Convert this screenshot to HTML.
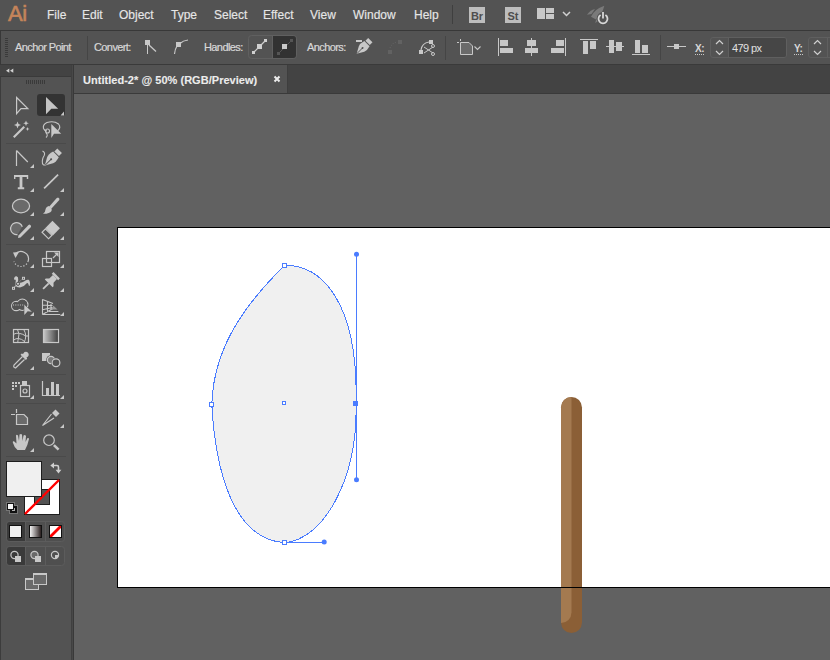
<!DOCTYPE html>
<html><head><meta charset="utf-8">
<style>
*{margin:0;padding:0;box-sizing:border-box}
html,body{width:830px;height:660px;overflow:hidden;background:#535353;font-family:"Liberation Sans",sans-serif}
.a{position:absolute}
.t{position:absolute;white-space:pre;color:#dcdcdc;line-height:1}
.m{font-size:12px;top:9px;color:#e6e6e6;-webkit-text-stroke:0.15px #e6e6e6}
.c{font-size:11px;top:42px;letter-spacing:-0.6px;color:#d8d8d8;-webkit-text-stroke:0.2px #d8d8d8}
svg{position:absolute;overflow:visible}
</style></head><body>
<!-- menu bar -->
<div class="a" style="left:0;top:0;width:830px;height:30px;background:#535353"></div>
<div class="t" style="left:8px;top:3px;font-size:22px;color:#c5845a;letter-spacing:-0.5px;-webkit-text-stroke:0.6px #c5845a">Ai</div>
<div class="t m" style="left:47px">File</div>
<div class="t m" style="left:82px">Edit</div>
<div class="t m" style="left:119px">Object</div>
<div class="t m" style="left:171px">Type</div>
<div class="t m" style="left:214px">Select</div>
<div class="t m" style="left:263px">Effect</div>
<div class="t m" style="left:310px">View</div>
<div class="t m" style="left:353px">Window</div>
<div class="t m" style="left:414px">Help</div>

<!-- control bar -->
<div class="a" style="left:0;top:30px;width:830px;height:35px;background:#535353;border-top:1px solid #383838;border-left:1px solid #383838;border-bottom:1px solid #3a3a3a"></div>
<div class="t c" style="left:15px">Anchor Point</div>
<div class="t c" style="left:94px">Convert:</div>
<div class="t c" style="left:204px">Handles:</div>
<div class="t c" style="left:307px">Anchors:</div>


<!-- top icons -->
<svg class="a" style="left:0;top:0" width="830" height="660" viewBox="0 0 830 660">
 <g shape-rendering="crispEdges">
  <rect x="452" y="5" width="1" height="19" fill="#3f3f3f"/>
  <rect x="469" y="7" width="16" height="16" fill="#bdbdbd"/>
  <rect x="505" y="7" width="16" height="16" fill="#bdbdbd"/>
  <rect x="537" y="8" width="8" height="11" fill="#c8c8c8"/>
  <rect x="546" y="8" width="8" height="5" fill="#c8c8c8"/>
  <rect x="546" y="14" width="8" height="5" fill="#c8c8c8"/>
 </g>
 <text x="477" y="20" font-size="11" font-weight="bold" fill="#4e4e4e" text-anchor="middle" font-family="Liberation Sans">Br</text>
 <text x="513" y="20" font-size="11" font-weight="bold" fill="#4e4e4e" text-anchor="middle" font-family="Liberation Sans">St</text>
 <path d="M563 12 L566.5 15.5 L570 12" fill="none" stroke="#d0d0d0" stroke-width="1.5"/>
 <!-- rocket -->
 <g fill="#7a7a7a">
  <path d="M591 16.8 Q594 9.5 604.3 5.8 Q602.5 14 596 19.5 Z"/>
  <path d="M587 14.8 Q590 10.2 595 9 L591.5 14 Z"/>
  <path d="M595.3 23 Q595.3 19.5 598 18 L597.5 21.5 Z"/>
 </g>
 <circle cx="603" cy="18.4" r="6.3" fill="#535353"/>
 <path d="M600.6 15 A4.5 4.5 0 1 0 605.4 15" fill="none" stroke="#d8d8d8" stroke-width="1.8"/>
 <rect x="602.1" y="12" width="1.8" height="6.5" fill="#d8d8d8"/>
 <!-- control bar grip -->
 <g shape-rendering="crispEdges" fill="#3a3a3a">
  <rect x="5" y="38" width="3" height="1"/><rect x="5" y="40" width="3" height="1"/><rect x="5" y="42" width="3" height="1"/>
  <rect x="5" y="44" width="3" height="1"/><rect x="5" y="46" width="3" height="1"/><rect x="5" y="48" width="3" height="1"/>
  <rect x="5" y="50" width="3" height="1"/><rect x="5" y="52" width="3" height="1"/><rect x="5" y="54" width="3" height="1"/>
  <rect x="5" y="56" width="3" height="1"/>
 </g>
 <g shape-rendering="crispEdges">
  <rect x="87" y="36" width="1" height="24" fill="#454545"/>
  <rect x="445" y="36" width="1" height="24" fill="#454545"/>
  <rect x="660" y="35" width="1" height="25" fill="#454545"/>
 </g>
 <!-- convert icons -->
 <g fill="#c8c8c8" stroke="#c8c8c8">
  <rect x="145" y="40" width="5" height="5" stroke="none"/>
  <rect x="147" y="45" width="1" height="9" stroke="none"/>
  <path d="M149 45 L156 51.5" stroke-width="1.3" fill="none"/>
  <rect x="176" y="42" width="5" height="5" stroke="none"/>
  <path d="M174.5 54 Q175 49 177 46" stroke-width="1.2" fill="none"/>
  <path d="M180 43.5 Q183 40.5 188 40" stroke-width="1.2" fill="none"/>
 </g>
 <!-- handles group -->
 <rect x="248.5" y="35.5" width="48" height="23" rx="3" fill="none" stroke="#606060"/>
 <path d="M273 36 H293 A3 3 0 0 1 296 39 V55 A3 3 0 0 1 293 58 H273 Z" fill="#323232"/>
 <rect x="272" y="36" width="1" height="22" fill="#606060" shape-rendering="crispEdges"/>
 <path d="M254 52 L265 41" stroke="#d0d0d0" stroke-width="1.2"/>
 <path d="M279 53 L291 41" stroke="#555" stroke-width="1"/>
 <g shape-rendering="crispEdges">
  <rect x="257" y="44" width="5" height="5" fill="#d0d0d0"/>
  <rect x="252" y="51" width="3" height="3" fill="#d0d0d0"/>
  <rect x="264" y="39" width="3" height="3" fill="#d0d0d0"/>
  <rect x="282" y="44" width="5" height="5" fill="#c8c8c8"/>
  <rect x="277" y="52" width="3" height="3" fill="#555"/>
  <rect x="290" y="39" width="3" height="3" fill="#555"/>
 </g>
 <!-- pen minus -->
 <rect x="356" y="40" width="6" height="2" fill="#c8c8c8"/>
 <g transform="translate(363.5,47) rotate(45) scale(0.92)" fill="#c8c8c8">
   <rect x="-3.3" y="-10.5" width="6.6" height="4.2"/>
   <path d="M-4 -5.3 H4 Q5.6 0 4.2 3 L0 10.5 L-4.2 3 Q-5.6 0 -4 -5.3 Z"/>
   <path d="M0 1 V10" stroke="#535353" stroke-width="1" fill="none"/>
   <circle cx="0" cy="1.5" r="1" fill="#535353"/>
 </g>
 <!-- disabled -->
 <rect x="388" y="50" width="4" height="4" fill="#626262"/>
 <rect x="398" y="40" width="4" height="4" fill="#626262"/>
 <path d="M390 48 Q392 43 397 42" fill="none" stroke="#626262" stroke-width="1.2" stroke-dasharray="1 1.5"/>
 <!-- scissors -->
 <rect x="419" y="50" width="4" height="4" fill="#c8c8c8"/>
 <rect x="429" y="40" width="4" height="4" fill="#c8c8c8"/>
 <path d="M421 50 Q422 43 429 42" fill="none" stroke="#c8c8c8" stroke-width="1.2"/>
 <path d="M424 47 L433 53 M424 53 L433 47" stroke="#c8c8c8" stroke-width="1"/>
 <circle cx="433" cy="46" r="1.5" fill="none" stroke="#c8c8c8"/>
 <circle cx="433" cy="54" r="1.5" fill="none" stroke="#c8c8c8"/>
 <!-- artboard isolate -->
 <path d="M460.5 42.5 H469 L472.5 46 V54.5 H460.5 Z" fill="#6a6a6a" stroke="#c8c8c8"/>
 <path d="M457 42.5 H459 M460.5 39 V41" stroke="#c8c8c8"/>
 <path d="M474.5 46.5 L477.5 49.5 L480.5 46.5" fill="none" stroke="#c8c8c8" stroke-width="1.1"/>
 <!-- align -->
 <g fill="#c8c8c8" shape-rendering="crispEdges">
  <rect x="498" y="38" width="1" height="18"/><rect x="500" y="40" width="8" height="6"/><rect x="500" y="48" width="13" height="5"/>
  <rect x="531" y="38" width="1" height="18"/><rect x="527" y="40" width="9" height="6"/><rect x="525" y="48" width="13" height="5"/>
  <rect x="565" y="38" width="1" height="18"/><rect x="556" y="40" width="8" height="6"/><rect x="551" y="48" width="13" height="5"/>
  <rect x="580" y="39" width="18" height="1"/><rect x="583" y="41" width="5" height="13"/><rect x="590" y="41" width="6" height="8"/>
  <rect x="606" y="46" width="18" height="1"/><rect x="609" y="40" width="5" height="13"/><rect x="616" y="42" width="6" height="9"/>
  <rect x="632" y="54" width="18" height="1"/><rect x="635" y="40" width="5" height="13"/><rect x="642" y="45" width="6" height="8"/>
  <rect x="667" y="46" width="19" height="1"/><rect x="674" y="44" width="5" height="5"/>
 </g>
 <!-- X: Y: dotted underline -->
 <g fill="#c8c8c8" shape-rendering="crispEdges">
  <rect x="695" y="54" width="1" height="1"/><rect x="697" y="54" width="1" height="1"/><rect x="699" y="54" width="1" height="1"/><rect x="701" y="54" width="1" height="1"/><rect x="703" y="54" width="1" height="1"/>
  <rect x="794" y="54" width="1" height="1"/><rect x="796" y="54" width="1" height="1"/><rect x="798" y="54" width="1" height="1"/><rect x="800" y="54" width="1" height="1"/><rect x="802" y="54" width="1" height="1"/>
 </g>
 <!-- stepper boxes -->
 <rect x="710.5" y="37.5" width="76" height="20" rx="2.5" fill="#535353" stroke="#5f5f5f"/>
 <path d="M728 38 H784 A2 2 0 0 1 786 40 V55 A2 2 0 0 1 784 57 H728 Z" fill="#464646"/>
 <rect x="728" y="38" width="1" height="19" fill="#5f5f5f"/>
 <path d="M716 44 L719.5 40.5 L723 44 M716 51 L719.5 54.5 L723 51" fill="none" stroke="#d0d0d0" stroke-width="1.2"/>
 <rect x="808.5" y="37.5" width="30" height="20" rx="2.5" fill="#535353" stroke="#5f5f5f"/>
 <rect x="827" y="38" width="1" height="19" fill="#5f5f5f"/>
 <path d="M814 44 L817.5 40.5 L821 44 M814 51 L817.5 54.5 L821 51" fill="none" stroke="#d0d0d0" stroke-width="1.2"/>
 <text x="695" y="51.5" font-size="10" font-weight="bold" fill="#d8d8d8" letter-spacing="-0.5" font-family="Liberation Sans">X:</text>
 <text x="794" y="51.5" font-size="10" font-weight="bold" fill="#d8d8d8" letter-spacing="-0.5" font-family="Liberation Sans">Y:</text>
 <text x="732" y="51.5" font-size="11" fill="#e0e0e0" letter-spacing="-0.6" font-family="Liberation Sans">479 px</text>
</svg>

<!-- tab bar -->
<div class="a" style="left:74px;top:65px;width:756px;height:29px;background:#434343;border-bottom:1px solid #3a3a3a"></div>
<div class="a" style="left:74px;top:65px;width:213px;height:28px;background:#535353"></div>
<div class="t" style="left:83px;top:75px;font-size:11px;font-weight:bold;letter-spacing:0.03px;color:#ececec;-webkit-text-stroke:0.1px #ececec">Untitled-2* @ 50% (RGB/Preview)</div>

<!-- pasteboard -->
<div class="a" style="left:74px;top:94px;width:756px;height:566px;background:#616161"></div>

<!-- left tools panel -->
<div class="a" style="left:0;top:65px;width:72px;height:595px;background:#535353;border-left:1px solid #3c3c3c"></div>
<div class="a" style="left:0;top:65px;width:72px;height:12px;background:#434343;border-bottom:1px solid #3a3a3a"></div>
<div class="a" style="left:71px;top:65px;width:3px;height:595px;background:linear-gradient(to right,#404040 0,#404040 1px,#484848 1px,#484848 2px,#393939 2px)"></div>


<!-- tools -->
<svg class="a" style="left:0;top:0" width="830" height="660" viewBox="0 0 830 660">
 <path d="M9.3 68.6 L6 70.7 L9.3 72.8 Z M13.3 68.6 L10 70.7 L13.3 72.8 Z" fill="#d0d0d0"/>
 <g shape-rendering="crispEdges" fill="#3a3a3a">
  <rect x="26" y="80" width="1" height="4"/><rect x="28" y="80" width="1" height="4"/><rect x="30" y="80" width="1" height="4"/><rect x="32" y="80" width="1" height="4"/><rect x="34" y="80" width="1" height="4"/><rect x="36" y="80" width="1" height="4"/><rect x="38" y="80" width="1" height="4"/><rect x="40" y="80" width="1" height="4"/><rect x="42" y="80" width="1" height="4"/><rect x="44" y="80" width="1" height="4"/>
 </g>
 <g shape-rendering="crispEdges" fill="#4a4a4a"><rect x="6" y="143" width="60" height="1"/><rect x="6" y="244" width="60" height="1"/><rect x="6" y="321" width="60" height="1"/><rect x="6" y="374" width="60" height="1"/><rect x="6" y="403" width="60" height="1"/><rect x="6" y="456" width="60" height="1"/></g>
 <rect x="37" y="94" width="28" height="22" rx="3" fill="#333333"/>
 <g fill="#c8c8c8"><path d="M34 164 V168 H30 Z"/><path d="M34 188 V192 H30 Z"/><path d="M64 188 V192 H60 Z"/><path d="M34 212 V216 H30 Z"/><path d="M64 212 V216 H60 Z"/><path d="M34 236 V240 H30 Z"/><path d="M64 236 V240 H60 Z"/><path d="M34 264 V268 H30 Z"/><path d="M64 264 V268 H60 Z"/><path d="M34 288 V292 H30 Z"/><path d="M64 288 V292 H60 Z"/><path d="M34 312 V316 H30 Z"/><path d="M64 312 V316 H60 Z"/><path d="M34 366 V370 H30 Z"/><path d="M34 395 V399 H30 Z"/><path d="M64 395 V399 H60 Z"/><path d="M64 424 V428 H60 Z"/><path d="M34 448 V452 H30 Z"/><path d="M64 111.5 V115.5 H60.5 Z" /></g>
 <g fill="none" stroke="#c8c8c8" stroke-width="1.2" stroke-linejoin="miter">
  <!-- selection -->
  <path d="M16.6 97.5 L27.8 108.6 L21 108.6 L16.6 113.6 Z"/>
  <!-- curvature -->
  <path d="M16.5 150.5 V166 M16.5 150.5 L27.8 162"/>
  <!-- ellipse -->
  <ellipse cx="21" cy="206" rx="8.6" ry="6.8" fill="#6a6a6a"/>
  <!-- rotate -->
  <path d="M15.4 254 A7.5 7.5 0 0 1 28.2 261"/>
  <path d="M28.2 261 A7.5 7.5 0 0 1 13.9 261.5" stroke-dasharray="1.2 1.8"/>
  <!-- scale -->
  <rect x="46.5" y="251.5" width="13" height="11"/>
  <rect x="42.5" y="258.5" width="9" height="8"/>
  <path d="M53 258 L57.5 253.5"/><path d="M58.5 252.5 V257 L54 252.5 Z" fill="#c8c8c8" stroke="none"/>
  <!-- shape builder -->
  <circle cx="16.2" cy="306" r="4.6"/>
  <circle cx="22.3" cy="304.8" r="5.6"/>
  <circle cx="16.2" cy="306" r="4" fill="#535353" stroke="none"/>
  <circle cx="22.3" cy="304.8" r="5" fill="#535353" stroke="none"/>
  <path d="M13 305 H25" stroke-dasharray="1 1.3" stroke-width="1.1"/>
  <!-- perspective -->
  <path d="M42.5 299.2 V314.8 M42.5 299.5 L53 303.5 M42.5 314.5 L53 308.5 M42.5 305 L52.5 305.5 M42.5 309.8 L52.5 307.5 M47.5 301.2 V312.2 M51 302.8 V310" stroke-width="1.1"/>
  <path d="M43 314.5 H60.3 M49 311.5 H58.4" stroke-width="1.1"/>
  <path d="M53.5 305.8 L57.5 309.5 H51 Z" fill="#9a9a9a" stroke="none"/>
  <!-- mesh -->
  <rect x="13.5" y="329.5" width="15" height="13"/>
  <path d="M17.5 329.5 Q20 334 18.4 338.5 Q17.8 340.5 17.8 342.5 M23.8 329.5 Q27.5 336 24.1 342.5 M13.5 334.4 Q16 332.8 18.8 333.3 M13.5 340.1 Q16 338.3 18.4 338.5 Q22 339 24.1 341.2 M19.2 333.3 Q23 334 25.7 336 H28.5" stroke-width="1"/>
  <!-- gradient -->
  <!-- eyedropper -->
  <path d="M22.5 356.5 L14 365 Q13 367.5 15.5 368 L24.5 359.5" />
  <!-- blend -->

  <!-- symbol sprayer -->
  <rect x="20.5" y="385.5" width="9" height="11"/>
  <circle cx="25" cy="391" r="2"/>
  <!-- graph -->
  <path d="M42.5 381 V395.5 H60"/>
  


<!-- artboard -->
  <path d="M16.5 414.5 H24 L27.5 418 V424.5 H16.5 Z" fill="#6a6a6a"/>
  <path d="M16.5 409 V413 M11 414.5 H15"/>
  <!-- slice -->
  <path d="M51.5 414 L42.5 425.5 L54 418"/>
  <!-- zoom -->
  <circle cx="49" cy="440.2" r="5.3"/>
  <!-- blob brush arc -->
  <path d="M22.3 226.8 A6 6 0 1 0 17.5 234.6" fill="#6a6a6a"/>
  <!-- pen tail -->
  <path d="M46.5 164.5 Q42 166.5 42.3 161 Q42.7 157.5 44.2 155.5 Q45.5 152.5 42.5 151" stroke-width="1.1"/>
  <!-- lasso loop -->
  <path d="M57.5 131 Q61.5 127.5 58.5 124 Q54 120.5 47 122.5 Q42.5 124.5 43.5 128.5 Q44.5 131 47 131" stroke-width="1.1"/>
  <circle cx="47.5" cy="131" r="2" stroke-width="1.1"/>
  <path d="M46 133 Q48.5 135 46 137.5" stroke-width="1.1"/>
 </g>
 <g fill="#c8c8c8">
  <!-- direct selection filled arrow -->
  <path d="M46 97 L58.2 108.8 L51.3 108.8 L46 114.2 Z" fill="#c4c4c4"/>
  <!-- magic wand -->
  <path d="M13 136.5 L23.5 126 L25 127.5 L14.5 138 Z"/>
  <path d="M17.5 121.5 L18.5 124 L21 125 L18.5 126 L17.5 128.5 L16.5 126 L14 125 L16.5 124 Z"/>
  <path d="M26 120.5 L26.8 122.5 L28.8 123.3 L26.8 124 L26 126 L25.2 124 L23.2 123.3 L25.2 122.5 Z"/>
  <path d="M27.5 127 L28.1 128.5 L29.6 129 L28.1 129.6 L27.5 131 L26.9 129.6 L25.4 129 L26.9 128.5 Z"/>
  <!-- lasso arrow -->
  <path d="M51.3 124 L61.2 133.8 L54 133.8 L51.3 138 Z"/>
  <!-- pen -->
  <g transform="translate(52.2,158.2) rotate(45)">
   <rect x="-3.3" y="-10.5" width="6.6" height="4.2"/>
   <path d="M-4 -5.3 H4 Q5.6 0 4.2 3 L0 10.5 L-4.2 3 Q-5.6 0 -4 -5.3 Z"/>
   <path d="M0 1 V10" stroke="#535353" stroke-width="1" fill="none"/>
   <circle cx="0" cy="1.5" r="1" fill="#535353"/>
  </g>
  <!-- type -->
  <path d="M14 175 H28.2 V179 H26.8 V177 H22.4 V187.3 H24.2 V189.2 H17.8 V187.3 H19.6 V177 H15.4 V179 H14 Z"/>
  <!-- line -->
  <path d="M43.5 187.8 L57.5 174 L58.7 175.2 L44.7 189 Z"/>
  <!-- brush -->
  <path d="M58 197.5 Q60 198 59.3 200 L51.5 208.5 L49.3 206.5 L56.5 198.3 Z"/>
  <path d="M49 206 Q52.5 208 51.5 211 Q49.5 214 43 213.8 Q45.5 212 45.5 209.5 Q46 206.5 49 206 Z"/>
  <!-- blob brush stick -->
  <path d="M29.5 224.5 Q31.5 225 31 227 L20.5 237.5 L18 238 L18.5 235.5 L28.5 225 Z"/>
  <!-- eraser -->
  <g transform="translate(56.2,224.6) rotate(45)"><rect x="-5.3" y="0" width="10.6" height="10"/><rect x="-4.6" y="10.6" width="9.2" height="4.8" fill="none" stroke="#c8c8c8" stroke-width="1.2"/></g>
  <!-- rotate arrowhead -->
  <path d="M13 252.5 L19 252 L15.5 258 Z"/>
  <!-- puppet body -->
  <path d="M13.5 288 L23.5 278.3" stroke="#c8c8c8" stroke-width="1"/>
  <path d="M14 279.8 Q14 276 16.5 276.3 Q18.5 276.8 18.2 279.5 L18 282 Q21 283.5 24 281.5 Q26.5 279.3 28.5 279.8 Q30.5 281 29.8 286 L28.8 285.5 Q28.5 282.5 27 283 Q24.5 286.5 20 287.5 Q16 287.5 15.5 285 Q15.5 282 15.8 280.5 Q15.5 279 14 279.8 Z"/>
  <path d="M18 283.8 L23 279" stroke="#535353" stroke-width="1"/>
  <circle cx="18" cy="283.8" r="1.6" fill="#c8c8c8" stroke="#535353" stroke-width="1"/>
  <rect x="12" y="286.8" width="3" height="3"/><rect x="22" y="276.8" width="3" height="3"/>
  <rect x="13" y="287.8" width="1" height="1" fill="#535353"/><rect x="23" y="277.8" width="1" height="1" fill="#535353"/>
  <!-- pin -->
  <g transform="translate(50,282) rotate(45)">
   <rect x="-4.5" y="-9.5" width="9" height="2.5"/>
   <path d="M-2.8 -7 H2.8 L3 -2 L5.5 0.5 V1.8 H-5.5 V0.5 L-3 -2 Z"/>
   <rect x="-0.9" y="1.8" width="1.8" height="8"/>
  </g>
  <!-- shape builder arrow -->
  <path d="M24.3 304.8 L31.9 311.7 L27.7 311.3 L24.3 315 Z" stroke="#535353" stroke-width="1" paint-order="stroke"/>
  <!-- eyedropper bulb -->
  <path d="M24.5 352 Q27.5 351 28.5 353.5 Q29.5 356 26.5 357.5 L27.2 358.8 L25.8 360 L20.5 354.8 L21.8 353.5 L23 354 Z"/>
  <!-- blend square -->
  <rect x="42" y="353" width="8" height="8"/><circle cx="51" cy="360" r="4.8" fill="#535353"/><circle cx="51" cy="360" r="3.6" fill="#7a7a7a" stroke="#c8c8c8" stroke-width="1.2"/><circle cx="56" cy="362.8" r="4.8" fill="#535353"/><circle cx="56" cy="362.8" r="3.9" fill="#535353" stroke="#c8c8c8" stroke-width="1.2"/>
  <!-- symbol sprayer dots -->
  <rect x="12" y="382" width="2" height="2"/><rect x="15" y="382" width="2" height="2"/><rect x="18" y="382" width="2" height="2"/>
  <rect x="12" y="385" width="2" height="2"/><rect x="15" y="385" width="2" height="2"/><rect x="12" y="388" width="2" height="2"/>
  <rect x="22" y="381" width="5" height="4"/>
  <!-- graph bars -->
  <rect x="46" y="388" width="3" height="7.5"/><rect x="51" y="382" width="3" height="13.5"/><rect x="56" y="384" width="3" height="11.5"/>
  <!-- slice cap -->
  <path d="M55.5 409.5 L59.5 413.5 L56 417 L52 413 Z"/>
  <!-- hand -->
  <path d="M17.5 450 Q14 447 12.8 442.5 Q12.5 441 14 441.3 L16.5 443.5 L16 435.5 Q16.5 434 18 435.5 L19 441 L19.5 434.5 Q21 433.5 22 434.5 L22.5 441 L23.5 435.5 Q25 434.5 26 436 L25.5 442 L27.5 438 Q29 437.5 29 439 Q27.5 446 25 450 Z"/>
  <!-- zoom handle -->
  <path d="M53 446 L54.8 444.2 L59.5 448.8 L57.7 450.6 Z"/>
 </g>
 <!-- gradient tool -->
 <defs><linearGradient id="gt" x1="0" x2="1"><stop offset="0" stop-color="#c8c8c8"/><stop offset="1" stop-color="#3c3c3c"/></linearGradient></defs>
 <rect x="43.5" y="329.5" width="15" height="13" fill="url(#gt)" stroke="#c8c8c8" stroke-width="1.2"/>
</svg>
<!-- fill stroke -->
<svg class="a" style="left:0;top:0" width="830" height="660" viewBox="0 0 830 660">
 <!-- stroke swatch -->
 <g shape-rendering="crispEdges">
  <rect x="24" y="479" width="36" height="36" fill="#1e1e1e"/>
  <rect x="25" y="480" width="34" height="34" fill="#ffffff"/>
  <rect x="34" y="489" width="16" height="16" fill="#1e1e1e"/>
  <rect x="35" y="490" width="14" height="14" fill="#535353"/>
 </g>
 <path d="M25 514 L59 480" stroke="#ff0000" stroke-width="2.4"/>
 <!-- fill swatch -->
 <g shape-rendering="crispEdges">
  <rect x="6" y="461" width="36" height="36" fill="#1e1e1e"/>
  <rect x="7" y="462" width="34" height="34" fill="#f0f0f0"/>
 </g>
 <!-- swap arrows -->
 <path d="M53 465.5 H57 Q58.5 465.5 58.5 467 V470.5" fill="none" stroke="#d0d0d0" stroke-width="1.6"/>
 <path d="M50.3 465.5 L54 462.6 V468.4 Z M58.5 473.5 L55.6 469.8 H61.4 Z" fill="#d0d0d0"/>
 <!-- default fill stroke -->
 <g shape-rendering="crispEdges">
  <rect x="6" y="502" width="9" height="9" fill="#767676"/>
  <rect x="9" y="505" width="9" height="9" fill="#767676"/>
  <rect x="10" y="506" width="7" height="7" fill="#111"/>
  <rect x="12" y="508" width="3" height="3" fill="#b0b0b0"/>
  <rect x="13" y="509" width="1" height="1" fill="#111"/>
  <rect x="7" y="503" width="7" height="7" fill="#111"/>
  <rect x="8" y="504" width="5" height="5" fill="#f8f8f8"/>
 </g>
 <!-- color mode group -->
 <rect x="6.5" y="521.5" width="58" height="20" rx="3" fill="#4f4f4f" stroke="#5c5c5c"/>
 <path d="M25 522 H10 A3 3 0 0 0 7 525 V538 A3 3 0 0 0 10 541 H25 Z" fill="#3a3a3a"/>
 <g shape-rendering="crispEdges">
  <rect x="25" y="522" width="1" height="19" fill="#5c5c5c"/>
  <rect x="45" y="522" width="1" height="19" fill="#5c5c5c"/>
  <rect x="9" y="525" width="13" height="13" fill="#111"/>
  <rect x="10" y="526" width="11" height="11" fill="#f0f0f0"/>
  <rect x="29" y="525" width="13" height="13" fill="#111"/>
  <rect x="49" y="525" width="13" height="13" fill="#111"/>
  <rect x="50" y="526" width="11" height="11" fill="#fff"/>
 </g>
 <defs><linearGradient id="gm" x1="0" x2="1"><stop offset="0" stop-color="#f4f4f4"/><stop offset="1" stop-color="#2a2020"/></linearGradient></defs>
 <rect x="30" y="526" width="11" height="11" fill="url(#gm)" shape-rendering="crispEdges"/>
 <clipPath id="nc"><rect x="50" y="526" width="11" height="11"/></clipPath><path d="M49.5 537.5 L61.5 525.5" stroke="#ff0000" stroke-width="2.8" clip-path="url(#nc)"/><rect x="49" y="525" width="13" height="13" fill="none" stroke="#111" stroke-width="1" transform="translate(0.5,0.5)" style="display:none"/>
 <rect x="49" y="525" width="13" height="13" fill="none" stroke="#111" stroke-width="1" transform="translate(0.5 0.5) scale(1)" style="display:none"/>
 <!-- draw mode group -->
 <rect x="6.5" y="546.5" width="58" height="19" rx="3" fill="#4f4f4f" stroke="#5c5c5c"/>
 <path d="M25 547 H10 A3 3 0 0 0 7 550 V562 A3 3 0 0 0 10 565 H25 Z" fill="#3a3a3a"/>
 <g shape-rendering="crispEdges">
  <rect x="25" y="547" width="1" height="18" fill="#5c5c5c"/>
  <rect x="45" y="547" width="1" height="18" fill="#5c5c5c"/>
 </g>
 <circle cx="14.5" cy="555" r="3.6" fill="none" stroke="#c8c8c8" stroke-width="1.2"/>
 <rect x="15" y="556" width="6" height="6" fill="#c8c8c8"/>
 <circle cx="34.5" cy="555" r="3.6" fill="#6a6a6a" stroke="#c8c8c8" stroke-width="1.2"/>
 <rect x="35" y="556" width="6" height="6" fill="#c8c8c8"/>
 <circle cx="55" cy="555" r="3.6" fill="none" stroke="#c8c8c8" stroke-width="1.2"/>
 <path d="M55 555 H58.5 A3.5 3.5 0 0 1 55 558.5 Z" fill="#c8c8c8"/>
 <!-- screen mode -->
 <g shape-rendering="crispEdges">
  <rect x="25" y="578" width="14" height="12" fill="#c8c8c8"/>
  <rect x="26" y="580" width="12" height="9" fill="#6a6a6a"/>
  <rect x="33" y="573" width="14" height="12" fill="#c8c8c8"/>
  <rect x="34" y="575" width="12" height="9" fill="#6a6a6a"/>
 </g>
 <!-- tab close -->
 <path d="M274.5 76.5 L279.5 81.5 M279.5 76.5 L274.5 81.5" stroke="#ececec" stroke-width="2"/><rect x="287" y="65" width="1" height="28" fill="#3e3e3e"/>
</svg>


<div class="a" style="left:117px;top:227px;width:720px;height:361px;background:#fff;border:1px solid #000"></div>
<!-- artboard -->
<svg class="a" style="left:0;top:0" width="830" height="660" viewBox="0 0 830 660">
 <!-- stick -->
 <path d="M561 407.5 A10.5 10.5 0 0 1 582 407.5 V622.5 A10.5 10.5 0 0 1 561 622.5 Z" fill="#8b5f36"/>
 <path d="M561 407.5 A10.5 10.5 0 0 1 571.5 397 V612.5 A10.5 10.5 0 0 1 561 623 Z" fill="#a47a50"/>
 <rect x="117" y="587" width="713" height="1" fill="#000" shape-rendering="crispEdges"/>
 <!-- egg -->
 <path d="M284.5 265.5 C321.1 263.7 358.5 302 356.1 403.6 C357.8 479.5 323.5 539.7 284.5 542.7 C231.8 539.2 215.2 466.9 211.8 404.5 C213.5 340.4 254.6 295.1 284.5 265.5 Z" fill="#f0f0f0" stroke="#4a7cff" stroke-width="1" shape-rendering="crispEdges"/>
 <g shape-rendering="crispEdges" fill="#4a7cff">
  <rect x="356" y="254" width="1" height="226"/>
  <rect x="284" y="542" width="40" height="1"/>
  <rect x="282" y="263" width="5" height="5"/>
  <rect x="209" y="402" width="5" height="5"/>
  <rect x="282" y="540" width="5" height="5"/>
  <rect x="282" y="401" width="4" height="4"/>
  <rect x="353" y="401" width="5" height="5"/>
 </g>
 <g shape-rendering="crispEdges" fill="#ffffff">
  <rect x="283" y="264" width="3" height="3"/>
  <rect x="210" y="403" width="3" height="3"/>
  <rect x="283" y="541" width="3" height="3"/>
  <rect x="283" y="402" width="2" height="2"/>
 </g>
 <g fill="#4a7cff">
  <circle cx="356.5" cy="254.3" r="2.5"/>
  <circle cx="356.5" cy="479.8" r="2.5"/>
  <circle cx="324.2" cy="542" r="2.5"/>
 </g>
</svg>

</body></html>
